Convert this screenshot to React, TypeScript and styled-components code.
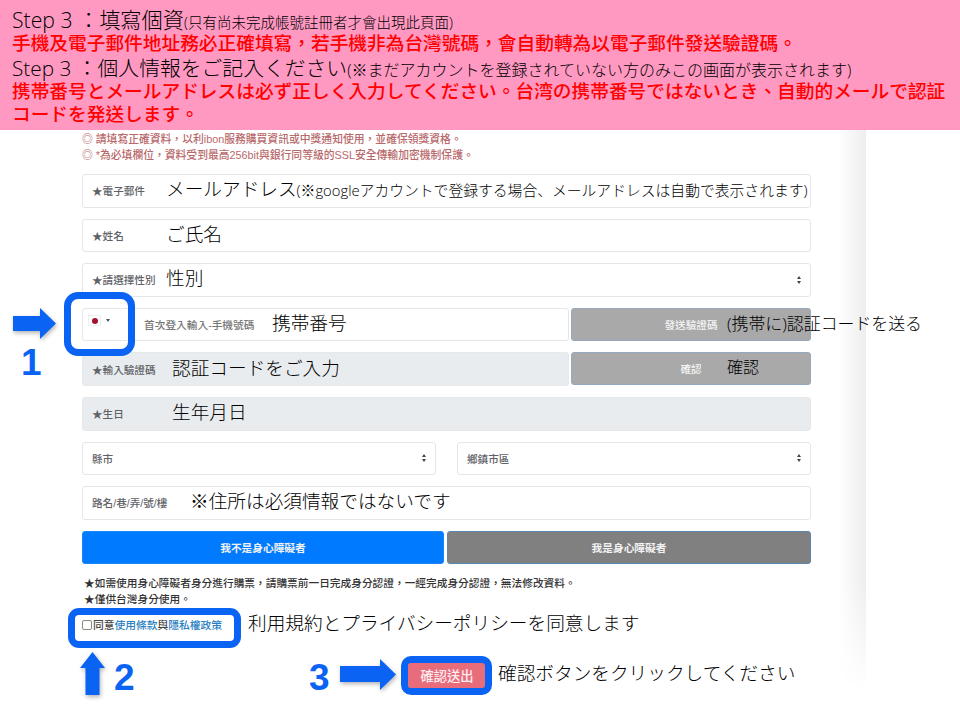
import React from 'react';
import styled, { createGlobalStyle } from 'styled-components';

const BLUE = '#0b63f3';
const CJK_TW = '"Liberation Sans", "Noto Sans CJK TC", sans-serif';
const CJK_JP = '"Open Sans", "Noto Sans CJK JP", sans-serif';

const GlobalStyle = createGlobalStyle`
  html, body {
    margin: 0;
    padding: 0;
    background: #fff;
  }
  * {
    box-sizing: border-box;
  }
`;

const ArrowShape: React.FC<{ className?: string; d: string; box: string }> = ({ className, d, box }) => (
  <svg className={className} viewBox={box}>
    <path d={d} fill={BLUE} />
  </svg>
);

const App: React.FC = () => {
  return (
    <Page>
      <GlobalStyle />
      <Banner>
        <StepLine>
          <span>Step 3 ：填寫個資</span>
          <small>(只有尚未完成帳號註冊者才會出現此頁面)</small>
        </StepLine>
        <WarnLine>手機及電子郵件地址務必正確填寫，若手機非為台灣號碼，會自動轉為以電子郵件發送驗證碼。</WarnLine>
        <StepLine $second>
          <span>Step 3 ：個人情報をご記入ください</span>
          <small>(※まだアカウントを登録されていない方のみこの画面が表示されます)</small>
        </StepLine>
        <WarnLine>
          携帯番号とメールアドレスは必ず正しく入力してください。台湾の携帯番号ではないとき、自動的メールで認証コードを発送します。
        </WarnLine>
      </Banner>

      <Sheet>
        <Notice>
          <p>◎ 請填寫正確資料，以利ibon服務購買資訊或中獎通知使用，並確保領獎資格。</p>
          <p>◎ *為必填欄位，資料受到最高256bit與銀行同等級的SSL安全傳輸加密機制保護。</p>
        </Notice>

        <Form>
          <Field>
            <Label $width={74}>★電子郵件</Label>
            <Note>
              メールアドレス<small>(※googleアカウントで登録する場合、メールアドレスは自動で表示されます)</small>
            </Note>
          </Field>
          <Field>
            <Label $width={74}>★姓名</Label>
            <Note>ご氏名</Note>
          </Field>
          <Field>
            <Label $width={74}>★請選擇性別</Label>
            <Note>性別</Note>
            <SelectArrows />
          </Field>

          <Pair>
            <Field>
              <Flag />
              <Caret />
              <PhoneLabel>首次登入輸入-手機號碼</PhoneLabel>
              <Note>携帯番号</Note>
            </Field>
            <ActionButton>
              <span>發送驗證碼</span>
              <ActionNote $size={16.9}>(携帯に)認証コードを送る</ActionNote>
            </ActionButton>
          </Pair>
          <Pair>
            <Field $disabled>
              <Label $width={80}>★輸入驗證碼</Label>
              <Note>認証コードをご入力</Note>
            </Field>
            <ActionButton>
              <span>確認</span>
              <ActionNote $size={16}>確認</ActionNote>
            </ActionButton>
          </Pair>
          <Field $disabled>
            <Label $width={80}>★生日</Label>
            <Note>生年月日</Note>
          </Field>

          <Selects>
            <Field>
              <Label $width={80}>縣市</Label>
              <SelectArrows />
            </Field>
            <Field>
              <Label $width={80}>鄉鎮市區</Label>
              <SelectArrows />
            </Field>
          </Selects>

          <Field>
            <Label $width={98}>路名/巷/弄/號/樓</Label>
            <Note>※住所は必須情報ではないです</Note>
          </Field>

          <Choices>
            <ChoiceButton $active>我不是身心障礙者</ChoiceButton>
            <ChoiceButton>我是身心障礙者</ChoiceButton>
          </Choices>
        </Form>

        <Rules>
          <p>★如需使用身心障礙者身分進行購票，請購票前一日完成身分認證，一經完成身分認證，無法修改資料。</p>
          <p>★僅供台灣身分使用。</p>
        </Rules>

        <Terms>
          <Check />
          <TermsText>
            同意<a>使用條款</a>與<a>隱私權政策</a>
          </TermsText>
          <TermsNote>利用規約とプライバシーポリシーを同意します</TermsNote>
        </Terms>

        <SubmitRow>
          <SubmitButton>確認送出</SubmitButton>
          <SubmitNote>確認ボタンをクリックしてください</SubmitNote>
        </SubmitRow>

        <EdgeShade />
      </Sheet>

      <FlagFrame />
      <TermsFrame />
      <SubmitFrame />
      <ArrowOne box="0 0 43 31" d="M0 8H27V0L43 15.5L27 31V23H0Z" />
      <ArrowTwo box="0 0 25 43" d="M12.5 0L25 16H19.5V43H5.5V16H0Z" />
      <ArrowThree box="0 0 56 31" d="M0 7H40V0L56 15.5L40 31V23H0Z" />
      <StepOne>1</StepOne>
      <StepTwo>2</StepTwo>
      <StepThree>3</StepThree>
    </Page>
  );
};

const Page = styled.div`
  position: relative;
  width: 960px;
  height: 720px;
  overflow: hidden;
  background: #fff;
`;

const Banner = styled.header`
  height: 130px;
  padding: 10px 8px 0 12px;
  background: #ff99c2;
  font-family: ${CJK_JP};
`;

const StepLine = styled.div<{ $second?: boolean }>`
  height: 20px;
  margin-top: ${(p) => (p.$second ? '5px' : '0')};
  font-size: ${(p) => (p.$second ? '20.8px' : '21.2px')};
  line-height: 20px;
  font-weight: 300;
  color: #000;
  white-space: nowrap;

  span,
  small {
    display: inline-block;
    line-height: 20px;
  }

  small {
    font-size: ${(p) => (p.$second ? '16px' : '14.5px')};
  }
`;

const WarnLine = styled.div`
  font-family: "Noto Sans CJK TC", sans-serif;
  font-size: 18.7px;
  line-height: 23px;
  font-weight: 500;
  color: #ff0000;
`;

const Sheet = styled.main`
  position: relative;
  width: 866px;
  height: 590px;
  padding: 1px 55px 0 82px;
`;

const Notice = styled.div`
  height: 43px;
  font-family: ${CJK_TW};
  font-size: 10.8px;
  font-weight: 500;
  color: #b8696b;

  p {
    margin: 0;
    height: 16px;
    line-height: 16px;
  }
`;

const Form = styled.div`
  display: flex;
  flex-direction: column;
  gap: 11px;
`;

const Field = styled.div<{ $disabled?: boolean }>`
  position: relative;
  display: flex;
  align-items: center;
  height: 33.6px;
  padding-left: 9px;
  background: ${(p) => (p.$disabled ? '#e9ecef' : '#fff')};
  border: 1px solid ${(p) => (p.$disabled ? '#e6e8ea' : '#e4e6e8')};
  border-radius: 3px;
`;

const Label = styled.span<{ $width: number }>`
  flex: none;
  width: ${(p) => p.$width}px;
  font-family: ${CJK_TW};
  font-size: 10.6px;
  font-weight: 500;
  color: #5f6368;
  white-space: nowrap;
`;

const PhoneLabel = styled.span`
  flex: none;
  width: 128px;
  margin-left: 34px;
  font-family: ${CJK_TW};
  font-size: 10.7px;
  font-weight: 500;
  color: #777;
  white-space: nowrap;
`;

const Note = styled.span`
  margin-top: -6px;
  font-family: ${CJK_JP};
  font-size: 18.67px;
  font-weight: 300;
  color: #000;
  white-space: nowrap;

  small {
    font-size: 14.8px;
  }
`;

const Flag = styled.i`
  position: relative;
  flex: none;
  width: 13px;
  height: 11px;
  margin: -8px 0 0 -4px;
  background: #fff;
  border: 1px solid #eee;

  &::after {
    content: '';
    position: absolute;
    left: 2.5px;
    top: 1.5px;
    width: 6px;
    height: 6px;
    border-radius: 50%;
    background: #a3122f;
  }
`;

const Caret = styled.i`
  flex: none;
  margin: -8px 0 0 5px;
  border-top: 3px solid #555;
  border-left: 2px solid transparent;
  border-right: 2px solid transparent;
`;

const SelectArrows = styled.i`
  position: absolute;
  right: 8px;
  top: 50%;
  margin-top: -4px;
  width: 5px;
  height: 8px;

  &::before,
  &::after {
    content: '';
    position: absolute;
    left: 0;
    border-left: 2.5px solid transparent;
    border-right: 2.5px solid transparent;
  }

  &::before {
    top: 0;
    border-bottom: 3px solid #444;
  }

  &::after {
    bottom: 0;
    border-top: 3px solid #444;
  }
`;

const Pair = styled.div`
  display: flex;
  gap: 2px;

  & > ${Field} {
    flex: none;
    width: 487px;
  }
`;

const ActionButton = styled.div`
  position: relative;
  flex: 1;
  display: flex;
  align-items: center;
  justify-content: center;
  height: 33px;
  background: #a9a9a9;
  border: 1px solid #97a9c0;
  border-radius: 3px;
  font-family: ${CJK_TW};
  font-size: 10.6px;
  font-weight: 500;
  color: #f4f4f4;
`;

const ActionNote = styled.span<{ $size: number }>`
  position: absolute;
  left: 155px;
  top: 1px;
  font-family: ${CJK_JP};
  font-size: ${(p) => p.$size}px;
  font-weight: 300;
  color: #000;
  white-space: nowrap;
`;

const Selects = styled.div`
  display: flex;
  gap: 21px;

  & > ${Field} {
    flex: 1;
  }
`;

const Choices = styled.div`
  display: grid;
  grid-template-columns: 362px 1fr;
  gap: 3px;
`;

const ChoiceButton = styled.div<{ $active?: boolean }>`
  display: flex;
  align-items: center;
  justify-content: center;
  height: 33px;
  background: ${(p) => (p.$active ? '#007bff' : '#808080')};
  border: 1px solid ${(p) => (p.$active ? '#1c86f5' : '#5c86ad')};
  border-radius: 3px;
  font-family: ${CJK_TW};
  font-size: 10.7px;
  font-weight: 700;
  color: #f2f2f2;
`;

const Rules = styled.div`
  margin: 11px 0 0 2px;
  font-family: ${CJK_TW};
  font-size: 10.7px;
  font-weight: 500;
  color: #333;

  p {
    margin: 0;
    height: 16px;
    line-height: 16px;
  }
`;

const Terms = styled.div`
  display: flex;
  align-items: center;
  height: 30px;
  margin-top: 3px;
`;

const Check = styled.i`
  flex: none;
  width: 10px;
  height: 10px;
  border: 1px solid #888;
  border-radius: 2px;
`;

const TermsText = styled.span`
  flex: none;
  width: 155px;
  margin-left: 1px;
  font-family: ${CJK_TW};
  font-size: 10.75px;
  font-weight: 500;
  color: #444;

  a {
    color: #2b7fc3;
  }
`;

const TermsNote = styled.span`
  margin-top: -6px;
  font-family: ${CJK_JP};
  font-size: 18.67px;
  font-weight: 300;
  color: #000;
  white-space: nowrap;
`;

const SubmitRow = styled.div`
  display: flex;
  align-items: center;
  gap: 12px;
  margin: 23px 0 0 326px;
`;

const SubmitButton = styled.div`
  flex: none;
  display: flex;
  align-items: center;
  justify-content: center;
  width: 78px;
  height: 25px;
  background: #e96c7b;
  border-radius: 2px;
  font-family: ${CJK_TW};
  font-size: 13.3px;
  font-weight: 500;
  color: #fbeef0;
`;

const SubmitNote = styled(TermsNote)`
  margin-top: -8px;
`;

const EdgeShade = styled.div`
  position: absolute;
  top: 0;
  bottom: 30px;
  right: 0;
  width: 28px;
  background: linear-gradient(to right, rgba(0, 0, 0, 0), rgba(0, 0, 0, 0.07));
  mask-image: linear-gradient(to bottom, #000 80%, transparent);
`;

const Frame = styled.div`
  position: absolute;
  border: 7px solid ${BLUE};
  pointer-events: none;
`;

const FlagFrame = styled(Frame)`
  left: 64px;
  top: 292px;
  width: 71px;
  height: 64px;
  border-radius: 14px;
`;

const TermsFrame = styled(Frame)`
  left: 68px;
  top: 608px;
  width: 173px;
  height: 40px;
  border-radius: 11px;
`;

const SubmitFrame = styled(Frame)`
  left: 401px;
  top: 656px;
  width: 91px;
  height: 39px;
  border-radius: 10px;
`;

const Arrow = styled(ArrowShape)`
  position: absolute;
  filter: drop-shadow(1px 2px 2px rgba(0, 0, 0, 0.3));
`;

const ArrowOne = styled(Arrow)`
  left: 13px;
  top: 308px;
  width: 43px;
  height: 31px;
`;

const ArrowTwo = styled(Arrow)`
  left: 80px;
  top: 652px;
  width: 25px;
  height: 43px;
`;

const ArrowThree = styled(Arrow)`
  left: 340px;
  top: 659px;
  width: 56px;
  height: 31px;
`;

const StepNumber = styled.span`
  position: absolute;
  font-family: "Liberation Sans", sans-serif;
  font-size: 37px;
  line-height: 37px;
  font-weight: 700;
  color: ${BLUE};
`;

const StepOne = styled(StepNumber)`
  left: 21px;
  top: 344px;
`;

const StepTwo = styled(StepNumber)`
  left: 114px;
  top: 659px;
`;

const StepThree = styled(StepNumber)`
  left: 309px;
  top: 659px;
`;

export default App;
